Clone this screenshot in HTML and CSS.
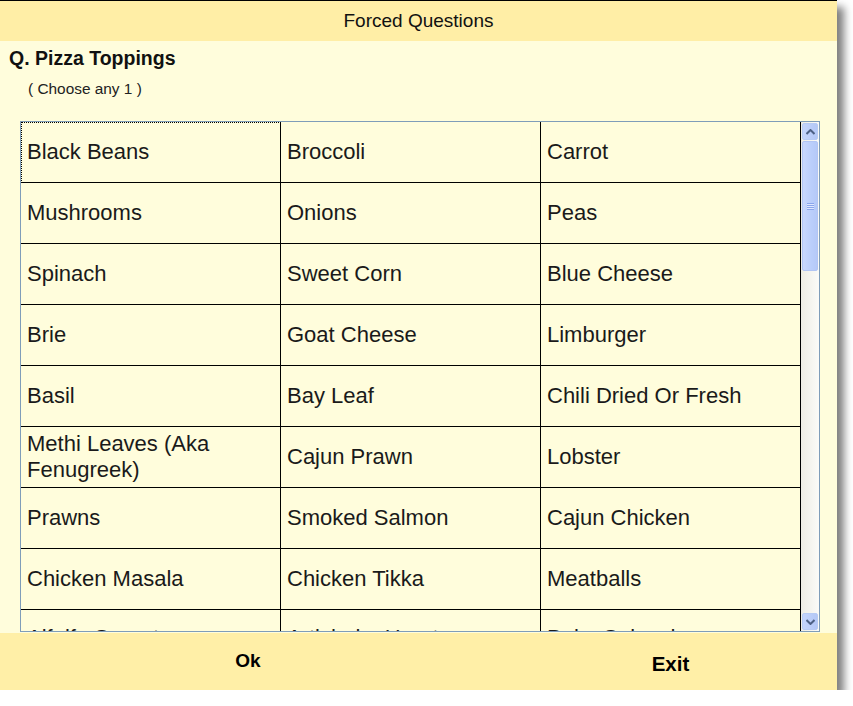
FILE: index.html
```html
<!DOCTYPE html>
<html>
<head>
<meta charset="utf-8">
<link rel="stylesheet" href="styles.css">
</head>
<body>
<div class="window">
  <div class="header">Forced Questions</div>
  <div class="question">Q. Pizza Toppings</div>
  <div class="hint">( Choose any 1 )</div>
  <div class="list">
    <div class="cells">
      <div class="cell focus">Black Beans</div>
      <div class="cell">Broccoli</div>
      <div class="cell">Carrot</div>
      <div class="cell">Mushrooms</div>
      <div class="cell">Onions</div>
      <div class="cell">Peas</div>
      <div class="cell">Spinach</div>
      <div class="cell">Sweet Corn</div>
      <div class="cell">Blue Cheese</div>
      <div class="cell">Brie</div>
      <div class="cell">Goat Cheese</div>
      <div class="cell">Limburger</div>
      <div class="cell">Basil</div>
      <div class="cell">Bay Leaf</div>
      <div class="cell">Chili Dried Or Fresh</div>
      <div class="cell">Methi Leaves (Aka Fenugreek)</div>
      <div class="cell">Cajun Prawn</div>
      <div class="cell">Lobster</div>
      <div class="cell">Prawns</div>
      <div class="cell">Smoked Salmon</div>
      <div class="cell">Cajun Chicken</div>
      <div class="cell">Chicken Masala</div>
      <div class="cell">Chicken Tikka</div>
      <div class="cell">Meatballs</div>
      <div class="cell partial">Alfalfa Sprouts</div>
      <div class="cell partial">Artichoke Hearts</div>
      <div class="cell partial">Baby Spinach</div>
    </div>
    <div class="scrollbar">
      <div class="sb-btn"><svg width="9" height="6" viewBox="0 0 9 6"><path d="M0.5 5 L4.5 1 L8.5 5" fill="none" stroke="#4d6185" stroke-width="2"/></svg></div>
      <div class="sb-thumb"><span class="grip"></span></div>
      <div class="sb-track"></div>
      <div class="sb-btn"><svg width="9" height="6" viewBox="0 0 9 6"><path d="M0.5 1 L4.5 5 L8.5 1" fill="none" stroke="#4d6185" stroke-width="2"/></svg></div>
    </div>
  </div>
  <div class="footer">
    <div class="btn ok">Ok</div>
    <div class="btn exit">Exit</div>
  </div>
</div>
</body>
</html>
```
FILE: styles.css
```css
html, body {
  margin: 0;
  padding: 0;
  background: #ffffff;
}
body {
  font-family: "Liberation Sans", Arial, sans-serif;
  color: #111;
}
.window {
  width: 837px;
  height: 689px;
  border-top: 1px solid #000;
  background: #fffddc;
  box-shadow: 7px 7px 8px rgba(0, 0, 0, 0.5);
  display: flex;
  flex-direction: column;
  overflow: hidden;
}
.header {
  height: 40px;
  line-height: 40px;
  background: #ffeea6;
  text-align: center;
  font-size: 19px;
  color: #111;
}
.question {
  margin-top: 6px;
  padding-left: 9px;
  line-height: 22px;
  font-size: 19.5px;
  font-weight: bold;
}
.hint {
  margin-top: 11px;
  padding-left: 28px;
  line-height: 18px;
  font-size: 15.4px;
  color: #222;
}
.list {
  margin-top: 23px;
  margin-left: 20px;
  width: 798px;
  height: 509px;
  border: 1px solid #7f9db9;
  display: flex;
  overflow: hidden;
  flex: none;
}
.cells {
  width: 780px;
  display: grid;
  grid-template-columns: repeat(3, 260px);
  grid-auto-rows: 61px;
  align-content: start;
}
.cell {
  position: relative;
  border-right: 1px solid #000;
  border-bottom: 1px solid #000;
  padding: 0 6px;
  display: flex;
  align-items: center;
  font-size: 22px;
  line-height: 26px;
  color: #1a1a1a;
}
.cell.partial {
  align-items: flex-start;
  padding-top: 15px;
}
.cell.focus::after {
  content: "";
  position: absolute;
  inset: 0 -1px -1px 0;
  border: 1px dotted #000;
}
.scrollbar {
  width: 18px;
  display: flex;
  flex-direction: column;
  background: linear-gradient(to right, #eeede5, #fbfbf8);
}
.sb-btn {
  height: 15px;
  margin: 1px;
  border: 1px solid #b7cbf4;
  border-radius: 2px;
  background: linear-gradient(to right, #c3d4fc, #b4c8f6);
  display: flex;
  align-items: center;
  justify-content: center;
  flex: none;
}
.sb-thumb {
  height: 128px;
  margin: 0 1px;
  border: 1px solid #b1c5f4;
  border-radius: 2px;
  background: linear-gradient(to right, #c9d8fd, #bacefb 60%, #b5c9f8);
  display: flex;
  align-items: center;
  justify-content: center;
  flex: none;
}
.grip {
  width: 7px;
  height: 7px;
  background: repeating-linear-gradient(to bottom, #8ba6ec 0, #8ba6ec 1px, #dfe8fe 1px, #dfe8fe 2px);
}
.sb-track {
  flex: 1;
}
.footer {
  margin-top: 1px;
  flex: 1;
  background: #ffefa7;
  display: flex;
  font-weight: bold;
  color: #000;
}
.btn {
  display: flex;
  align-items: center;
  justify-content: center;
}
.ok {
  width: 496px;
  font-size: 19px;
  padding-bottom: 2px;
}
.exit {
  flex: 1;
  font-size: 20.5px;
  padding-left: 8px;
  padding-top: 4px;
}
```
